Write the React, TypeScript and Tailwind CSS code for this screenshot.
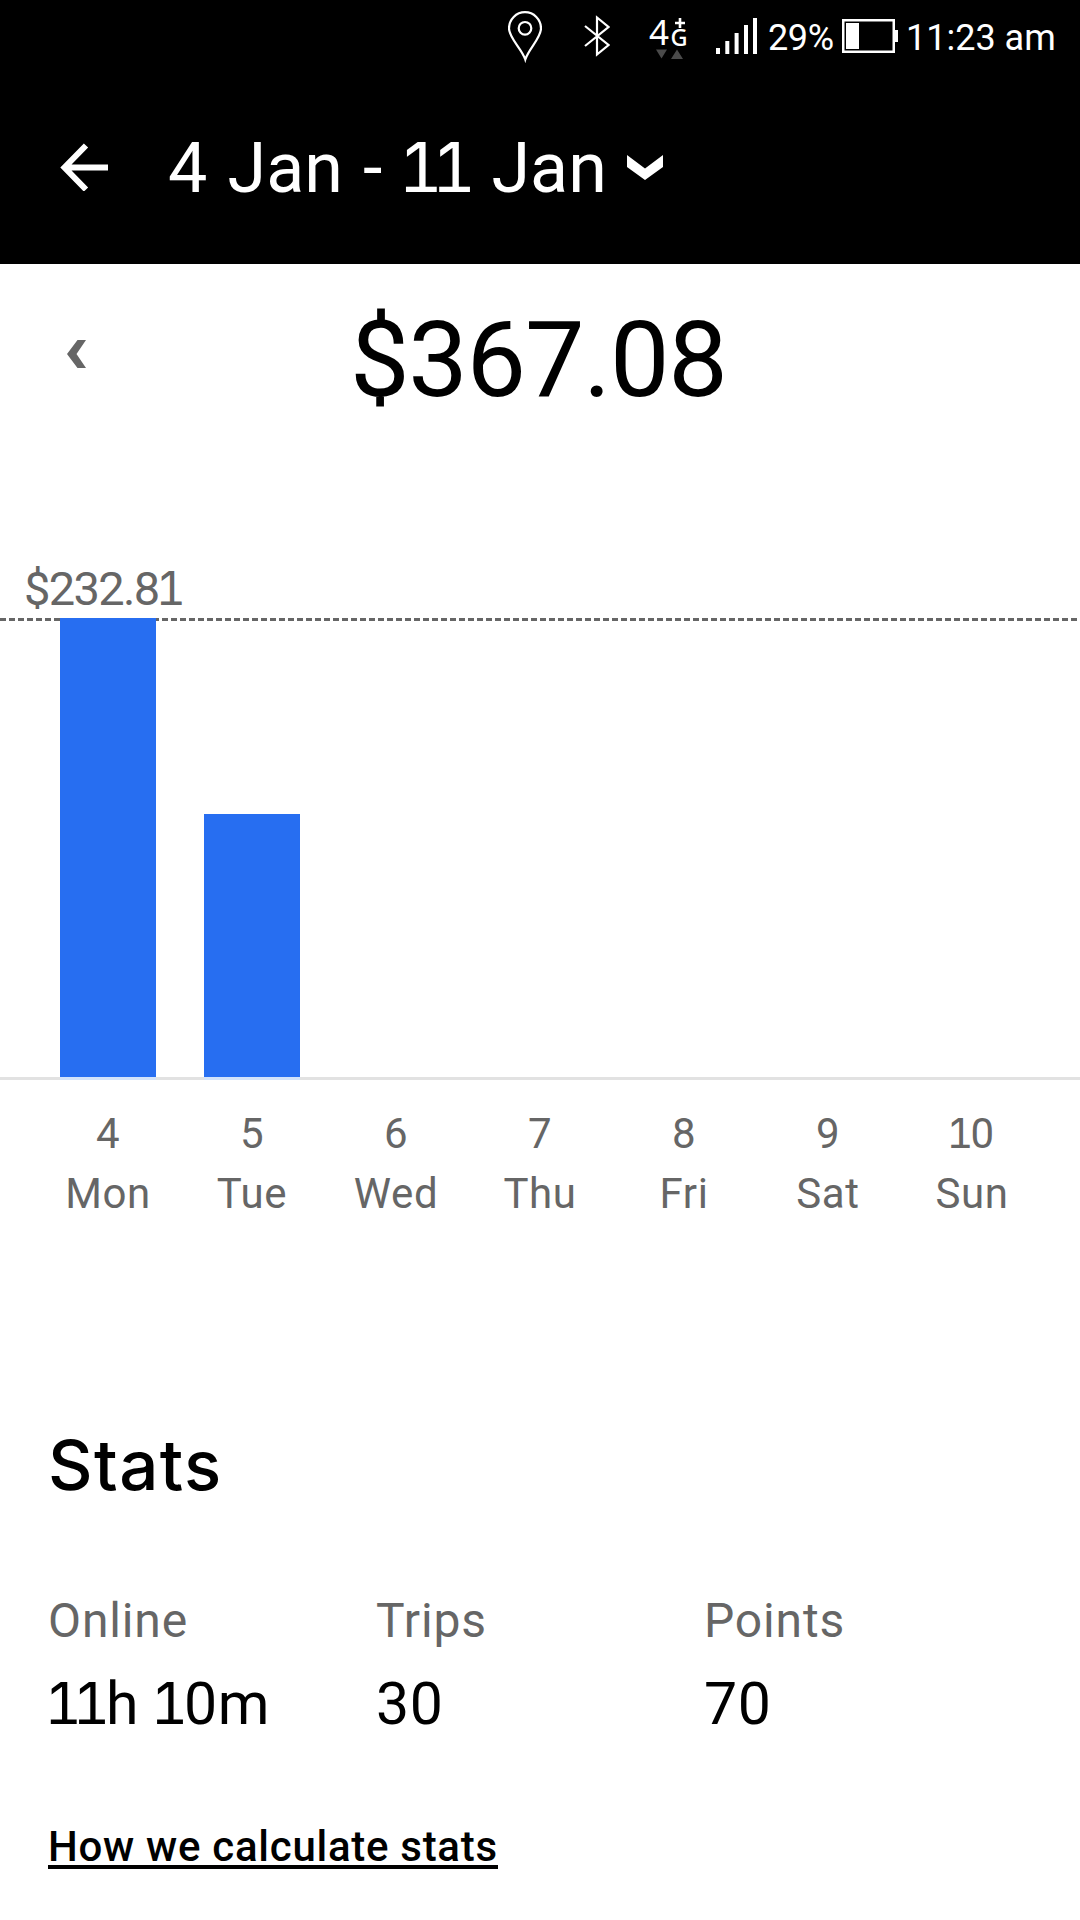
const days = [
  { date: "4", name: "Mon", height: 459 },
  { date: "5", name: "Tue", height: 263 },
  { date: "6", name: "Wed", height: 0 },
  { date: "7", name: "Thu", height: 0 },
  { date: "8", name: "Fri", height: 0 },
  { date: "9", name: "Sat", height: 0 },
  { date: "10", name: "Sun", height: 0 },
]

const stats = [
  { label: "Online", value: "11h 10m" },
  { label: "Trips", value: "30" },
  { label: "Points", value: "70" },
]

// Sets every run of ones with the slab-footed tabular figure
function Figures({ text }: { text: string }) {
  return (
    <>
      {text.split(/(1+)/).map((part, i) =>
        part.startsWith("1") ? (
          <span
            key={i}
            className="mr-[0.09em] -ml-[0.06em] font-['Inter'] text-[0.975em] leading-none tabular-nums tracking-[-0.16em]"
          >
            {part}
          </span>
        ) : (
          part
        ),
      )}
    </>
  )
}

function StatusBar() {
  return (
    <div className="flex h-[74px] items-center justify-end pr-[25px] text-[36px] leading-none text-white">
      <svg className="h-[74px] w-[34px]" viewBox="508 0 34 74" fill="none" stroke="currentColor" strokeWidth="2.2">
        <path d="M525.3 59.5C522 49 509 38 509 28.5a16 16.3 0 0 1 32 0C541 38 528.5 49 525.3 59.5Z" />
        <circle cx="525" cy="28.3" r="6.3" />
      </svg>
      <svg className="ml-[42px] h-[74px] w-[26px]" viewBox="584 0 26 74" fill="none" stroke="currentColor" strokeWidth="2.2">
        <path d="M585 26 608.5 45 597 54.5V17.5L608.5 27 585 46" />
      </svg>
      <svg className="ml-[39px] h-[74px] w-[38px]" viewBox="649 0 38 74" fill="currentColor">
        <text x="649" y="45" fontSize="35" className="font-['Noto_Sans']">4</text>
        <text x="670.5" y="45.5" fontSize="23.5" className="font-['Noto_Sans'] font-medium">G</text>
        <path d="M675 23h10M680 18v10" stroke="currentColor" strokeWidth="2.6" />
        <path d="M656 49.5h11l-5.5 9zM671 59h12l-6-9.5z" fill="#4a4a4a" />
      </svg>
      <svg className="ml-[29px] h-[74px] w-[41px]" viewBox="716 0 41 74" fill="currentColor">
        <path d="M716 48h4v6h-4zM725.3 41h4v13h-4zM734.6 33h4v21h-4zM744 25h4v29h-4zM753 18h4v36h-4z" />
      </svg>
      <span className="ml-[11px] w-[66px] pt-0.5 tracking-[-0.01em] whitespace-nowrap">29%</span>
      <svg className="ml-[8px] h-[74px] w-[56px]" viewBox="842 0 56 74">
        <rect x="843.25" y="20.25" width="50.5" height="31.5" fill="none" stroke="#fff" strokeWidth="2.5" />
        <path d="M846 23h13v26h-13zM895 30h3v12h-3z" fill="#fff" />
      </svg>
      <span className="ml-[8px] w-[149px] pt-0.5 whitespace-nowrap">11:23 am</span>
    </div>
  )
}

function Header() {
  return (
    <header className="h-[264px] bg-black text-white">
      <StatusBar />
      <div className="flex h-[186px] items-center pl-[60px]">
        <svg className="h-12 w-12" viewBox="0 0 48 48" fill="none" stroke="currentColor" strokeWidth="6">
          <path d="M26 2.5 4.5 24.5 26 46.5M5 24.5h43" />
        </svg>
        <h1 className="ml-[60px] w-[440px] pt-0.5 text-[70px] leading-[90px] [word-spacing:0.04em] whitespace-nowrap">
          <Figures text="4 Jan - 11 Jan" />
        </h1>
        <svg className="ml-[19px] h-[25px] w-9" viewBox="0 0 36 25" fill="currentColor">
          <path d="M0 0v12l18 13 18-13V0L18 13.5z" />
        </svg>
      </div>
    </header>
  )
}

function WeekChart() {
  return (
    <section className="mt-[105px] text-[#666666]">
      <div className="-mb-px pl-6 text-[47px] leading-[60px] tracking-[-0.035em]">
        <Figures text="$232.81" />
      </div>
      <div className="relative flex h-[462px] items-end border-b-3 border-[#e2e2e2] px-9">
        <svg className="absolute inset-x-0 top-0 h-[3px] w-full">
          <line x1="0" y1="1.5" x2="1080" y2="1.5" stroke="#666666" strokeWidth="3" strokeDasharray="6 3" />
        </svg>
        {days.map((day) => (
          <div key={day.date} className="relative flex flex-1 justify-center">
            <div className="w-24 bg-[#276ef1] shadow-[0_3px_0_#d3e3fb]" style={{ height: day.height }} />
          </div>
        ))}
      </div>
      <div className="flex px-9 pt-6 text-center text-[42px] leading-[60px] tracking-[0.015em]">
        {days.map((day) => (
          <div key={day.date} className="flex-1">
            <div><Figures text={day.date} /></div>
            <div>{day.name}</div>
          </div>
        ))}
      </div>
    </section>
  )
}

function Stats() {
  return (
    <section className="mt-[201px] px-12">
      <h2 className="font-['Inter'] text-[69px] leading-[80px] font-medium tracking-[0.02em]">Stats</h2>
      <div className="mt-[86px] grid grid-cols-3">
        {stats.map((stat) => (
          <div key={stat.label}>
            <div className="text-[48px] leading-[60px] tracking-[0.018em] text-[#666666]">{stat.label}</div>
            <div className="mt-[13px] text-[59px] leading-[80px] tracking-[0.01em]">
              <Figures text={stat.value} />
            </div>
          </div>
        ))}
      </div>
      <a href="#" className="mt-[85px] inline-block border-b-4 border-black text-[42px] leading-9 font-medium tracking-[0.017em]">
        How we calculate stats
      </a>
    </section>
  )
}

export default function App() {
  return (
    <div className="h-[1920px] w-[1080px] overflow-hidden bg-white font-['Roboto',sans-serif] text-black">
      <Header />
      <div className="flex h-[190px] items-center">
        <svg className="-mt-[10px] ml-[67px] h-[28px] w-[19px]" viewBox="0 0 19 28" fill="#666666">
          <path d="M10.5 0H19L9.5 14 19 28h-8.5L0 14z" />
        </svg>
        <div className="ml-[264px] pt-0.5 text-[106px] leading-[120px] tracking-[-0.012em]">$367.08</div>
      </div>
      <WeekChart />
      <Stats />
    </div>
  )
}
